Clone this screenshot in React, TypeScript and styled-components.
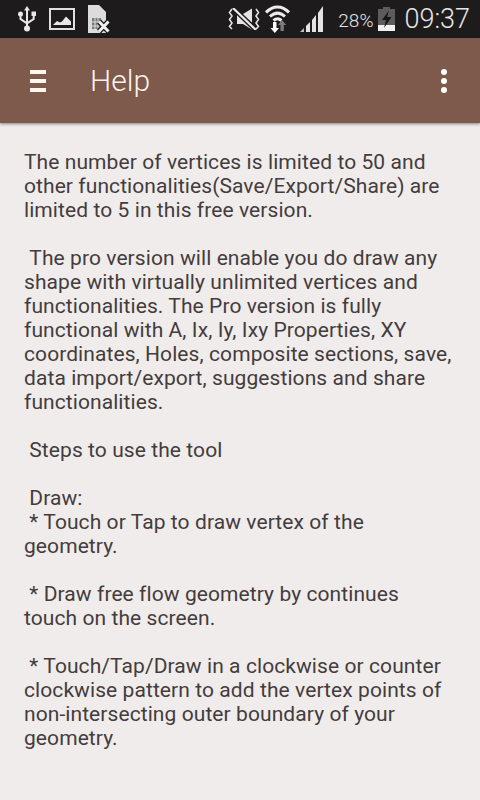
import React from 'react';
import styled, { createGlobalStyle } from 'styled-components';

const Global = createGlobalStyle`
  html, body {
    margin: 0;
    padding: 0;
    background: #f0ecec;
  }
  * {
    box-sizing: border-box;
  }
`;

const Screen = styled.div`
  width: 480px;
  height: 800px;
  overflow: hidden;
  display: flex;
  flex-direction: column;
  background: #f0ecec;
  font-family: Roboto, "Noto Sans", sans-serif;
`;

const StatusBar = styled.div`
  height: 38px;
  flex: none;
  background: #1d1b1c;
  display: flex;
  align-items: center;
  padding: 0 10px 0 18px;
`;

const StatusLeft = styled.div`
  display: flex;
  align-items: center;
  gap: 13px;
`;

const StatusRight = styled.div`
  margin-left: auto;
  display: flex;
  align-items: center;
  color: #e6e6e6;
`;

const WifiSlot = styled.span`
  display: flex;
  margin: 0 10px 0 5px;
`;

const Percent = styled.span`
  font-size: 19px;
  font-weight: 300;
  margin: 2px 5px 0 14px;
`;

const Clock = styled.span`
  font-size: 27px;
  font-weight: 300;
  margin-left: 9px;
`;

const ToolBar = styled.header`
  height: 85px;
  flex: none;
  background: #7d5a4c;
  display: flex;
  align-items: center;
  padding: 0 33px 0 30px;
  box-shadow: 0 1px 3px rgba(0, 0, 0, 0.45);
  position: relative;
`;

const MenuBars = styled.div`
  width: 16px;
  display: flex;
  flex-direction: column;
  gap: 5px;
`;

const MenuBar = styled.span`
  display: block;
  height: 4px;
  background: #fdf6ee;
`;

const Title = styled.h1`
  margin: 0 0 0 44px;
  font-size: 30px;
  font-weight: 300;
  color: #fbf3ec;
`;

const Dots = styled.div`
  margin-left: auto;
  display: flex;
  flex-direction: column;
  gap: 3px;
`;

const Dot = styled.span`
  width: 6px;
  height: 6px;
  border-radius: 50%;
  background: #fff;
`;

const Body = styled.main`
  padding: 27px 24px 0;
  font-size: 21px;
  line-height: 24px;
  letter-spacing: 0.08px;
  color: #443c3c;
  white-space: pre-wrap;
`;

const UsbIcon = () => (
  <svg width="18" height="26" viewBox="0 0 18 26" fill="#e8e8e8">
    <path d="M9 0l3 4.500h-2V20H8V4.500H6z" />
    <circle cx="9" cy="22.500" r="3" />
    <circle cx="2.500" cy="8" r="2.500" />
    <path d="M1.500 9h2v3.500L8 15.500V18l-6.500-4.500z" />
    <path d="M13.500 5.500H18V10h-1.300v3.500L10 18v-2.500l4.700-3V10h-1.200z" />
  </svg>
);

const PictureIcon = () => (
  <svg width="26" height="22" viewBox="0 0 26 22">
    <rect x="1" y="1" width="24" height="20" fill="none" stroke="#e0e0e0" strokeWidth="2" />
    <path d="M4 17l4-4 3 1.500 2-1 4-5 3 3 2 2v3.500z" fill="#e8e8e8" />
  </svg>
);

const SimIcon = () => (
  <svg width="22" height="28" viewBox="0 0 22 28">
    <path d="M0 0h11l7 7v21H0z" fill="#dcdcdc" />
    <path d="M4 13h9v11H4z" fill="#7a7a7a" />
    <path d="M7 13v11M10 13v11M4 17h9M4 21h9" stroke="#dcdcdc" strokeWidth="1" />
    <path d="M11 16.500l9.500 10M20.500 16.500L11 26.500" stroke="#1d1b1c" strokeWidth="5.500" fill="none" />
    <path d="M11 16.500l9.500 10M20.500 16.500L11 26.500" stroke="#f0f0f0" strokeWidth="3" fill="none" />
  </svg>
);

const MuteIcon = () => (
  <svg width="32" height="22" viewBox="0 0 32 22" fill="none">
    <path d="M9 6h6l9-5.500v21L15 16H9z" fill="#e4e4e4" />
    <path d="M5 0l23 22" stroke="#1d1b1c" strokeWidth="5" />
    <path d="M5 0l23 22" stroke="#ececec" strokeWidth="2.200" />
    <path
      d="M4 1L1.500 4.500 4 8 1.500 11.500 4 15 1.500 18.500 4 21M28 1l2.500 3.500L28 8l2.500 3.500L28 15l2.500 3.500L28 21"
      stroke="#e0e0e0"
      strokeWidth="1.600"
    />
  </svg>
);

const WifiIcon = () => (
  <svg width="25" height="28" viewBox="0 0 25 28" fill="none">
    <path d="M1 7.500c7-7.500 16-7.500 23 0" stroke="#ececec" strokeWidth="3" />
    <path d="M5 11.500c5-4.500 10-4.500 15 0" stroke="#ececec" strokeWidth="3" />
    <path d="M8.500 15.500c3-2.500 5-2.500 8 0" stroke="#ececec" strokeWidth="3" />
    <path d="M8 17h3.500v6H14l-4.200 5-4.300-5H8z" fill="#fff" />
    <path d="M17 15l4.200 5h-2.400v6h-3.300v-6H13z" fill="#7c7c7c" />
  </svg>
);

const SignalIcon = () => (
  <svg width="24" height="26" viewBox="0 0 24 26" fill="#e4e4e4">
    <path d="M0 26l4-4v4z" fill="#bdbdbd" />
    <path d="M6 26v-6l4-4v10z" />
    <path d="M12 26V14l4-5v17z" />
    <path d="M18 26V7l5-7v26z" />
  </svg>
);

const BatteryIcon = () => (
  <svg width="17" height="24" viewBox="0 0 17 24">
    <path d="M5 0h7v2h5v22H0V2h5z" fill="#5c5c5c" />
    <path d="M0 18h17v6H0z" fill="#f0f0f0" />
    <path d="M11 3.500L4 13h4l-2 8 7.500-11H9z" fill="#161616" />
  </svg>
);

const helpText = `The number of vertices is limited to 50 and
other functionalities(Save/Export/Share) are
limited to 5 in this free version.

 The pro version will enable you do draw any
shape with virtually unlimited vertices and
functionalities. The Pro version is fully
functional with A, Ix, Iy, Ixy Properties, XY
coordinates, Holes, composite sections, save,
data import/export, suggestions and share
functionalities.

 Steps to use the tool

 Draw:
 * Touch or Tap to draw vertex of the
geometry.

 * Draw free flow geometry by continues
touch on the screen.

 * Touch/Tap/Draw in a clockwise or counter
clockwise pattern to add the vertex points of
non-intersecting outer boundary of your
geometry.`;

const App = () => (
  <Screen>
    <Global />
    <StatusBar>
      <StatusLeft>
        <UsbIcon />
        <PictureIcon />
        <SimIcon />
      </StatusLeft>
      <StatusRight>
        <MuteIcon />
        <WifiSlot>
          <WifiIcon />
        </WifiSlot>
        <SignalIcon />
        <Percent>28%</Percent>
        <BatteryIcon />
        <Clock>09:37</Clock>
      </StatusRight>
    </StatusBar>
    <ToolBar>
      <MenuBars>
        <MenuBar />
        <MenuBar />
        <MenuBar />
      </MenuBars>
      <Title>Help</Title>
      <Dots>
        <Dot />
        <Dot />
        <Dot />
      </Dots>
    </ToolBar>
    <Body>{helpText}</Body>
  </Screen>
);

export default App;
